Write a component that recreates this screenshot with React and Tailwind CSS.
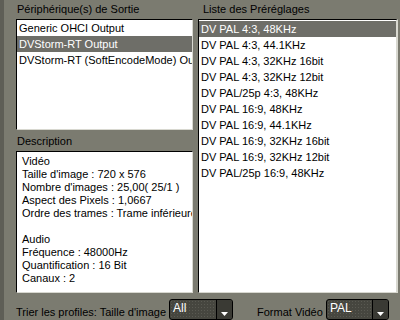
import React from 'react';

const devices = ['Generic OHCI Output', 'DVStorm-RT Output', 'DVStorm-RT (SoftEncodeMode) Output'];

const presets = [
  'DV PAL 4:3, 48KHz',
  'DV PAL 4:3, 44.1KHz',
  'DV PAL 4:3, 32KHz 16bit',
  'DV PAL 4:3, 32KHz 12bit',
  'DV PAL/25p 4:3, 48KHz',
  'DV PAL 16:9, 48KHz',
  'DV PAL 16:9, 44.1KHz',
  'DV PAL 16:9, 32KHz 16bit',
  'DV PAL 16:9, 32KHz 12bit',
  'DV PAL/25p 16:9, 48KHz',
];

const description = [
  'Vidéo',
  "Taille d'image : 720 x 576",
  'Nombre d\'images : 25,00( 25/1 )',
  'Aspect des Pixels : 1,0667',
  'Ordre des trames : Trame inférieure',
  '',
  'Audio',
  'Fréquence : 48000Hz',
  'Quantification : 16 Bit',
  'Canaux : 2',
];

const Combo = ({ value, width }) => (
  <div className={`flex-none flex h-[21px] rounded-[3px] border border-black bg-[#46463f] text-white overflow-hidden ${width}`}>
    <div className="flex-1 pl-[3px] leading-[17px] text-[12px] bg-[radial-gradient(#5a5a52_0.6px,transparent_0.6px)] bg-[length:3px_3px]">
      {value}
    </div>
    <div className="w-[16px] border-l border-black bg-[#3a3a34] flex items-start justify-center pt-[12px]">
      <svg width="7" height="4" viewBox="0 0 7 4">
        <path d="M0 0h7L3.5 4z" fill="#fff" />
      </svg>
    </div>
  </div>
);

const App = () => {
  return (
    <div
      className="w-[400px] h-[320px] overflow-hidden bg-[#7b7b70] border-l-[4px] border-[#5e5e56] text-[11px] text-black flex flex-col"
      style={{ fontFamily: '"Liberation Sans", Tahoma, sans-serif' }}
    >
      <div className="flex pl-[12px] gap-[5px] h-[296px]">
        <div className="w-[177px] flex flex-col">
          <div className="h-[19px] pl-[1px] pt-[3px] leading-[13px]">Périphérique(s) de Sortie</div>
          <div className="h-[111px] bg-white border-t border-l border-black border-r border-b border-r-[#d8d8d0] border-b-[#d8d8d0] overflow-hidden">
            {devices.map((d, i) => (
              <div
                key={d}
                className={`h-[16px] leading-[16px] pl-[2px] whitespace-nowrap ${i === 1 ? 'bg-[#6e6e68] text-white' : ''}`}
              >
                {d}
              </div>
            ))}
          </div>
          <div className="h-[21px] pl-[1px] pt-[5px] leading-[13px]">Description</div>
          <div className="flex-1 bg-white border-t border-l border-black border-r border-b border-r-[#d8d8d0] border-b-[#d8d8d0] overflow-hidden pl-[5px] pt-[3px]">
            {description.map((l, i) => (
              <div key={i} className="h-[13px] leading-[13px] whitespace-nowrap">
                {l}
              </div>
            ))}
          </div>
        </div>
        <div className="w-[200px] flex flex-col">
          <div className="h-[19px] pl-[5px] pt-[3px] leading-[13px]">Liste des Préréglages</div>
          <div className="flex-1 bg-white border-t border-l border-black border-r-2 border-b border-r-[#d8d8d0] border-b-[#d8d8d0] overflow-hidden pt-[1px]">
            {presets.map((p, i) => (
              <div
                key={p}
                className={`h-[16px] leading-[16px] pl-[2px] whitespace-nowrap ${i === 0 ? 'bg-[#6e6e68] text-white' : ''}`}
              >
                {p}
              </div>
            ))}
          </div>
        </div>
      </div>
      <div className="flex items-start pl-[12px] pt-[6px] whitespace-nowrap">
        <span className="flex-none w-[153px] pt-[5px]">Trier les profiles: Taille d'image</span>
        <Combo value="All" width="w-[64px]" />
        <span className="flex-none ml-[24px] w-[69px] pt-[5px]">Format Vidéo</span>
        <Combo value="PAL" width="w-[63px]" />
      </div>
    </div>
  );
};

export default App;
